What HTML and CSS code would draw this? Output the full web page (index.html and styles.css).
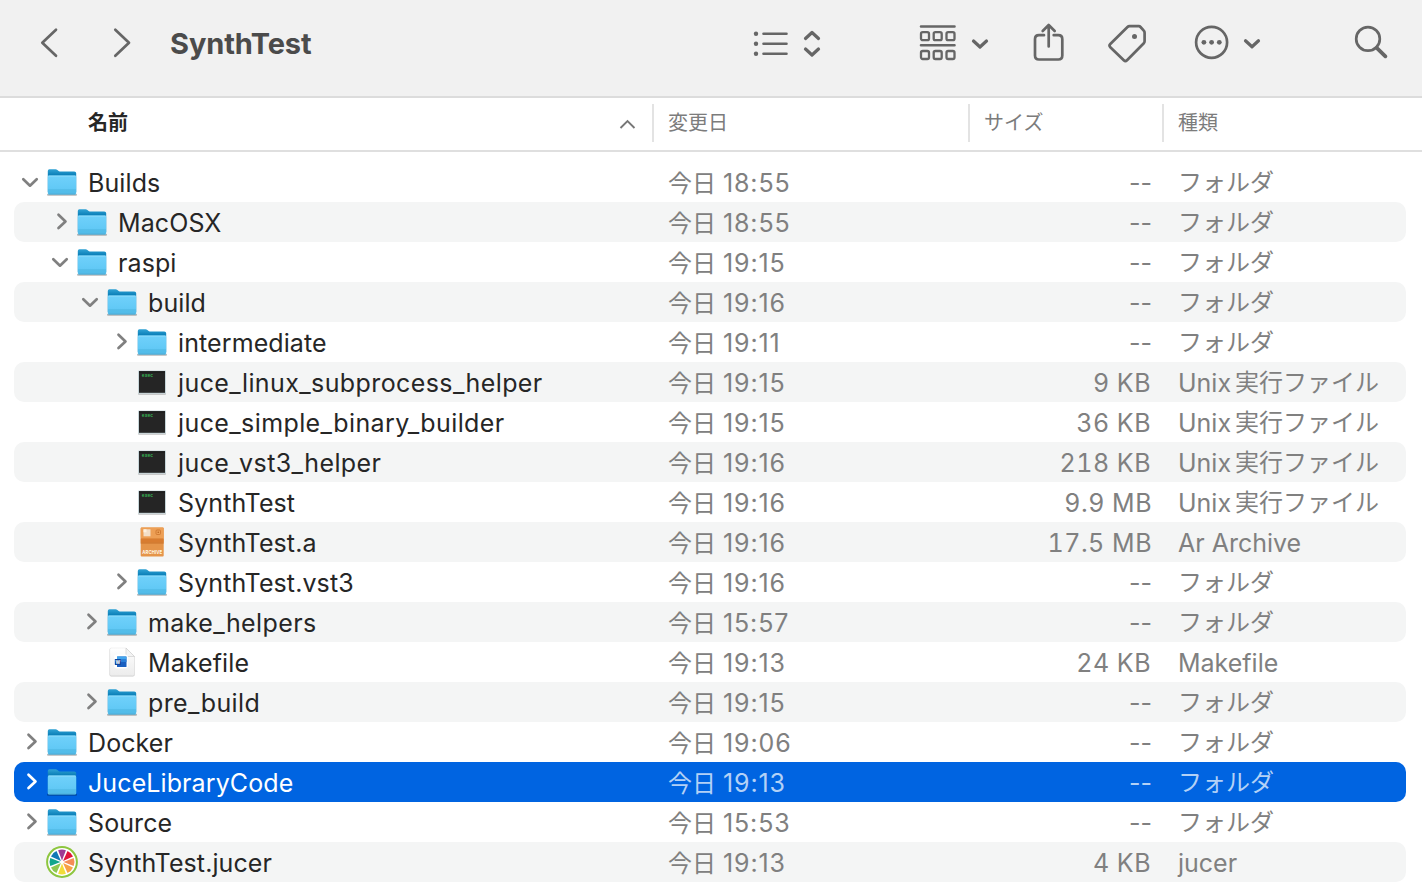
FILE: index.html
```html
<!DOCTYPE html>
<html lang="ja">
<head>
  <meta charset="UTF-8" />
  <meta name="viewport" content="width=device-width, initial-scale=1.0" />
  <title>SynthTest</title>
  <link rel="stylesheet" href="styles.css">
</head>
<body>

  <!-- Shared icons -->
  <svg class="defs" width="0" height="0">
    <defs>
      <linearGradient id="folderBack" x1="0" y1="0" x2="0" y2="1">
        <stop offset="0" stop-color="#31a3d5"/>
        <stop offset="0.25" stop-color="#0c80b9"/>
        <stop offset="1" stop-color="#0c80b9"/>
      </linearGradient>
      <linearGradient id="folderFront" x1="0" y1="0" x2="0" y2="1">
        <stop offset="0" stop-color="#70d1fb"/>
        <stop offset="1" stop-color="#5bc5f3"/>
      </linearGradient>
      <linearGradient id="paper" x1="0" y1="0" x2="0" y2="1">
        <stop offset="0" stop-color="#ffffff"/>
        <stop offset="1" stop-color="#ececec"/>
      </linearGradient>
      <symbol id="folder" viewBox="0 0 32 32">
        <path d="M2 28.700h28" stroke="#000" stroke-opacity=".28" stroke-width="2" stroke-linecap="round"/>
        <path d="M1.800 5q0-1.800 1.600-1.800h6.200q1 0 1.800.8l.9.800q.6.600 1.600.600h14.300q2 0 2 1.800V26H1.800z" fill="url(#folderBack)"/>
        <path d="M1.800 11q0-1.400 1.400-1.400h25.600q1.400 0 1.400 1.400v16q0 1.500-1.400 1.500H3.200q-1.400 0-1.400-1.500z" fill="url(#folderFront)"/>
        <path d="M2.500 10h27" stroke="#a1e2fc" stroke-width=".7"/>
        <path d="M2 24h28M2 26h28" stroke="#45add9" stroke-width=".8"/>
        <path d="M2.600 28h26.800" stroke="#3f9dc4" stroke-width=".8"/>
      </symbol>
      <symbol id="exec" viewBox="0 0 32 32">
        <rect x="2" y="6" width="28" height="23" rx="1" fill="#000" opacity=".18"/>
        <rect x="2" y="4.500" width="28" height="23.300" rx=".8" fill="#c7d6da"/>
        <rect x="3" y="5.300" width="26" height="21.500" fill="#252525"/>
        <rect x="3" y="5.300" width="26" height="1" fill="#111"/>
        <text x="5.800" y="10.600" font-family="Liberation Mono, monospace" font-size="4.600" font-weight="bold" fill="#35b553">exec</text>
      </symbol>
      <symbol id="archive" viewBox="0 0 32 32">
        <rect x="4.700" y="1.500" width="23" height="29" rx="1" fill="#e5954a"/>
        <rect x="4.700" y="1.500" width="23" height="11" rx="1" fill="#ed9f55"/>
        <rect x="4.700" y="12.500" width="23" height="4" fill="#d87c30"/>
        <rect x="4.700" y="16.500" width="23" height="1" fill="#c97026"/>
        <rect x="7.500" y="3.300" width="7" height="7" fill="#f3dfc8"/>
        <rect x="7.500" y="3.300" width="3" height="3" fill="#fff2df"/>
        <rect x="20" y="4" width="4.500" height="4.500" rx="1" fill="none" stroke="#ca742c" stroke-width=".8"/>
        <circle cx="22.250" cy="6.250" r=".8" fill="#b86520"/>
        <text x="16.200" y="28.200" text-anchor="middle" textLength="20" lengthAdjust="spacingAndGlyphs" font-family="Inter, sans-serif" font-size="5.400" font-weight="bold" fill="#fff4e4">ARCHIVE</text>
      </symbol>
      <symbol id="doc" viewBox="0 0 32 32">
        <path d="M3.500 4q0-1.700 1.700-1.700h15L28.700 10.500v18.300q0 1.700-1.700 1.700H5.200q-1.700 0-1.700-1.700z" fill="#000" opacity=".2"/>
        <path d="M3.700 3.700q0-1.700 1.700-1.700h14.600l8.500 8.500v17.600q0 1.700-1.700 1.700H5.400q-1.700 0-1.700-1.700z" fill="url(#paper)" stroke="#dedede" stroke-width=".4"/>
        <path d="M20 2l8.500 8.500h-6.600q-1.900 0-1.900-1.900z" fill="#f4f4f4" stroke="#c9c9c9" stroke-width=".6"/>
        <rect x="8" y="8.500" width="14" height="14" rx="3" fill="#fff"/>
        <rect x="11" y="10.500" width="9.500" height="10.500" rx=".5" fill="#1a5fc0"/>
        <rect x="11" y="10.500" width="9.500" height="3" fill="#42a5ee"/>
        <rect x="11" y="13.500" width="9.500" height="2.500" fill="#2b7fd8"/>
        <rect x="8.800" y="13" width="6" height="6" rx=".6" fill="#12469c"/>
        <text x="11.800" y="17.600" text-anchor="middle" font-family="Inter, sans-serif" font-size="4.500" font-weight="bold" fill="#fff">W</text>
      </symbol>
      <symbol id="jucer" viewBox="0 0 32 32">
        <circle cx="16" cy="16" r="14.900" fill="#fff" stroke="#8dc63f" stroke-width="2"/>
        <path d="M16 14.500l-3.900-10.200q3.900-1.600 7.800 0z" fill="#9e3b94"/>
        <path d="M16 14.500l-3.900-10.200q3.900-1.600 7.800 0z" fill="#e1153c" transform="rotate(45 16 16)"/>
        <path d="M16 14.500l-3.900-10.200q3.900-1.600 7.800 0z" fill="#f58d56" transform="rotate(90 16 16)"/>
        <path d="M16 14.500l-3.900-10.200q3.900-1.600 7.800 0z" fill="#f7a146" transform="rotate(135 16 16)"/>
        <path d="M16 14.500l-3.900-10.200q3.900-1.600 7.800 0z" fill="#f2dc39" transform="rotate(180 16 16)"/>
        <path d="M16 14.500l-3.900-10.200q3.900-1.600 7.800 0z" fill="#8fc850" transform="rotate(225 16 16)"/>
        <path d="M16 14.500l-3.900-10.200q3.900-1.600 7.800 0z" fill="#12a58d" transform="rotate(270 16 16)"/>
        <path d="M16 14.500l-3.900-10.200q3.900-1.600 7.800 0z" fill="#1179b5" transform="rotate(315 16 16)"/>
      </symbol>
      <symbol id="open" viewBox="0 0 20 20">
        <path d="M3.300 7.300l6.700 6.400 6.700-6.400" fill="none" stroke="currentColor" stroke-width="2.700" stroke-linecap="round" stroke-linejoin="round"/>
      </symbol>
      <symbol id="closed" viewBox="0 0 20 20">
        <path d="M8.500 2.800l7 6.600-7 6.600" fill="none" stroke="currentColor" stroke-width="2.700" stroke-linecap="round" stroke-linejoin="round"/>
      </symbol>
    </defs>
  </svg>

  <header class="toolbar">
    <svg class="tool back" width="20" height="32" viewBox="0 0 20 32"><path d="M17 2.800L3.300 15.800l13.700 13"/></svg>
    <svg class="tool forward" width="20" height="32" viewBox="0 0 20 32"><path d="M3.300 2.800l13.700 13-13.700 13"/></svg>
    <h1>SynthTest</h1>

    <svg class="tool view" width="70" height="32" viewBox="0 0 70 32">
      <g fill="currentColor" stroke="none"><circle cx="4" cy="6.800" r="2.200"/><circle cx="4" cy="16.800" r="2.200"/><circle cx="4" cy="26.800" r="2.200"/></g>
      <path d="M11.500 6.800h23M11.500 16.800h23M11.500 26.800h23" stroke-width="2.600"/>
      <path d="M53.500 11.500l6.500-6 6.500 6M53.500 22l6.500 6 6.500-6" stroke-width="3.200"/>
    </svg>
    <svg class="tool group" width="72" height="38" viewBox="0 0 72 38">
      <path d="M3 2.500h33.500M3 21.300h33.500" stroke-width="2.600"/>
      <g stroke-width="2.300">
        <rect x="3" y="8.200" width="8" height="8" rx="1.700"/><rect x="15.700" y="8.200" width="8" height="8" rx="1.700"/><rect x="28.500" y="8.200" width="8" height="8" rx="1.700"/>
        <rect x="3" y="27" width="8" height="8" rx="1.700"/><rect x="15.700" y="27" width="8" height="8" rx="1.700"/><rect x="28.500" y="27" width="8" height="8" rx="1.700"/>
      </g>
      <path d="M55.500 17l6.500 6 6.500-6" stroke-width="3.200"/>
    </svg>
    <svg class="tool share" width="32" height="40" viewBox="0 0 32 40">
      <path d="M11 12.200H6q-4 0-4 4v16.300q0 4 4 4h19.300q4 0 4-4V16.200q0-4-4-4H20.700"/>
      <path d="M15.700 23.500V2.500M9.700 8l6-6 6 6"/>
    </svg>
    <svg class="tool tag" width="40" height="40" viewBox="0 0 40 40">
      <path d="M22.500 3.200h9.300q1 0 1.700.8l3.300 3.700q.8.800.8 2v8.500q0 1.200-.8 2L20 37.200q-1.600 1.600-3.200 0L3.300 24.200q-1.600-1.600 0-3.200L20.500 4q.8-.8 2-.8z"/>
      <circle cx="27.500" cy="13.500" r="2.500" fill="currentColor" stroke="none"/>
    </svg>
    <svg class="tool more" width="68" height="36" viewBox="0 0 68 36">
      <circle cx="18.600" cy="17.300" r="15.500"/>
      <g fill="currentColor" stroke="none"><circle cx="10.900" cy="17.300" r="2.400"/><circle cx="18.600" cy="17.300" r="2.400"/><circle cx="26.300" cy="17.300" r="2.400"/></g>
      <path d="M52.500 15.800l6.500 6 6.500-6" stroke-width="3.200"/>
    </svg>
    <svg class="tool search" width="36" height="36" viewBox="0 0 36 36">
      <circle cx="14" cy="13.900" r="11.800"/>
      <path d="M22.700 22.800l8.700 8.500" stroke-width="3.800"/>
    </svg>
  </header>

  <div class="columns">
    <div class="sorted"><span>名前</span>
      <svg width="18" height="12" viewBox="0 0 18 12"><path d="M2.500 10l7-7 7 7" fill="none" stroke="#777" stroke-width="1.900"/></svg>
    </div>
    <div>変更日</div>
    <div>サイズ</div>
    <div>種類</div>
  </div>

  <main class="list">
    <div class="row">
      <div class="name l0"><svg class="arrow"><use href="#open"/></svg><svg class="icon"><use href="#folder"/></svg><span>Builds</span></div>
      <div class="date"><span class="jp">今日</span> 18:55</div><div class="size none">--</div><div class="kind"><span class="jp">フォルダ</span></div>
    </div>
    <div class="row">
      <div class="name l1"><svg class="arrow"><use href="#closed"/></svg><svg class="icon"><use href="#folder"/></svg><span>MacOSX</span></div>
      <div class="date"><span class="jp">今日</span> 18:55</div><div class="size none">--</div><div class="kind"><span class="jp">フォルダ</span></div>
    </div>
    <div class="row">
      <div class="name l1"><svg class="arrow"><use href="#open"/></svg><svg class="icon"><use href="#folder"/></svg><span>raspi</span></div>
      <div class="date"><span class="jp">今日</span> 19:15</div><div class="size none">--</div><div class="kind"><span class="jp">フォルダ</span></div>
    </div>
    <div class="row">
      <div class="name l2"><svg class="arrow"><use href="#open"/></svg><svg class="icon"><use href="#folder"/></svg><span>build</span></div>
      <div class="date"><span class="jp">今日</span> 19:16</div><div class="size none">--</div><div class="kind"><span class="jp">フォルダ</span></div>
    </div>
    <div class="row">
      <div class="name l3"><svg class="arrow"><use href="#closed"/></svg><svg class="icon"><use href="#folder"/></svg><span>intermediate</span></div>
      <div class="date"><span class="jp">今日</span> 19:11</div><div class="size none">--</div><div class="kind"><span class="jp">フォルダ</span></div>
    </div>
    <div class="row">
      <div class="name l3"><svg class="arrow"></svg><svg class="icon"><use href="#exec"/></svg><span class="snake">juce_linux_subprocess_helper</span></div>
      <div class="date"><span class="jp">今日</span> 19:15</div><div class="size">9 KB</div><div class="kind">Unix<span class="jp after">実行ファイル</span></div>
    </div>
    <div class="row">
      <div class="name l3"><svg class="arrow"></svg><svg class="icon"><use href="#exec"/></svg><span class="snake">juce_simple_binary_builder</span></div>
      <div class="date"><span class="jp">今日</span> 19:15</div><div class="size">36 KB</div><div class="kind">Unix<span class="jp after">実行ファイル</span></div>
    </div>
    <div class="row">
      <div class="name l3"><svg class="arrow"></svg><svg class="icon"><use href="#exec"/></svg><span class="snake">juce_vst3_helper</span></div>
      <div class="date"><span class="jp">今日</span> 19:16</div><div class="size">218 KB</div><div class="kind">Unix<span class="jp after">実行ファイル</span></div>
    </div>
    <div class="row">
      <div class="name l3"><svg class="arrow"></svg><svg class="icon"><use href="#exec"/></svg><span>SynthTest</span></div>
      <div class="date"><span class="jp">今日</span> 19:16</div><div class="size mb">9.9 MB</div><div class="kind">Unix<span class="jp after">実行ファイル</span></div>
    </div>
    <div class="row">
      <div class="name l3"><svg class="arrow"></svg><svg class="icon"><use href="#archive"/></svg><span>SynthTest.a</span></div>
      <div class="date"><span class="jp">今日</span> 19:16</div><div class="size mb">17.5 MB</div><div class="kind">Ar Archive</div>
    </div>
    <div class="row">
      <div class="name l3"><svg class="arrow"><use href="#closed"/></svg><svg class="icon"><use href="#folder"/></svg><span>SynthTest.vst3</span></div>
      <div class="date"><span class="jp">今日</span> 19:16</div><div class="size none">--</div><div class="kind"><span class="jp">フォルダ</span></div>
    </div>
    <div class="row">
      <div class="name l2"><svg class="arrow"><use href="#closed"/></svg><svg class="icon"><use href="#folder"/></svg><span class="snake">make_helpers</span></div>
      <div class="date"><span class="jp">今日</span> 15:57</div><div class="size none">--</div><div class="kind"><span class="jp">フォルダ</span></div>
    </div>
    <div class="row">
      <div class="name l2"><svg class="arrow"></svg><svg class="icon"><use href="#doc"/></svg><span>Makefile</span></div>
      <div class="date"><span class="jp">今日</span> 19:13</div><div class="size">24 KB</div><div class="kind">Makefile</div>
    </div>
    <div class="row">
      <div class="name l2"><svg class="arrow"><use href="#closed"/></svg><svg class="icon"><use href="#folder"/></svg><span class="snake">pre_build</span></div>
      <div class="date"><span class="jp">今日</span> 19:15</div><div class="size none">--</div><div class="kind"><span class="jp">フォルダ</span></div>
    </div>
    <div class="row">
      <div class="name l0"><svg class="arrow"><use href="#closed"/></svg><svg class="icon"><use href="#folder"/></svg><span>Docker</span></div>
      <div class="date"><span class="jp">今日</span> 19:06</div><div class="size none">--</div><div class="kind"><span class="jp">フォルダ</span></div>
    </div>
    <div class="row selected">
      <div class="name l0"><svg class="arrow"><use href="#closed"/></svg><svg class="icon"><use href="#folder"/></svg><span>JuceLibraryCode</span></div>
      <div class="date"><span class="jp">今日</span> 19:13</div><div class="size none">--</div><div class="kind"><span class="jp">フォルダ</span></div>
    </div>
    <div class="row">
      <div class="name l0"><svg class="arrow"><use href="#closed"/></svg><svg class="icon"><use href="#folder"/></svg><span>Source</span></div>
      <div class="date"><span class="jp">今日</span> 15:53</div><div class="size none">--</div><div class="kind"><span class="jp">フォルダ</span></div>
    </div>
    <div class="row">
      <div class="name l0"><svg class="arrow"></svg><svg class="icon"><use href="#jucer"/></svg><span>SynthTest.jucer</span></div>
      <div class="date"><span class="jp">今日</span> 19:13</div><div class="size">4 KB</div><div class="kind">jucer</div>
    </div>
  </main>

</body>
</html>
```
FILE: styles.css
```css
* {
  box-sizing: border-box;
}
body {
  margin: 0;
  height: 892px;
  overflow: hidden;
  background: #fff;
  font-family: Inter, "Noto Sans CJK JP", sans-serif;
  font-size: 25px;
  font-weight: 430;
  color: #262626;
}
.defs {
  display: block;
}

/* Toolbar */
.toolbar {
  display: flex;
  align-items: center;
  height: 98px;
  padding: 0 32px 10px 39px;
  background: #f1f1f1;
  border-bottom: 2px solid #dcdcdc;
}
.toolbar h1 {
  width: 582px;
  margin: 0 0 0 38px;
  padding-top: 2px;
  font-size: 29px;
  line-height: 40px;
  font-weight: 700;
  letter-spacing: -0.1px;
  color: #4b4b4b;
}
.tool {
  flex: none;
  color: #666;
  fill: none;
  stroke: currentColor;
  stroke-width: 2.7;
  stroke-linecap: round;
  stroke-linejoin: round;
}
.forward {
  margin-left: 53px;
}
.group {
  margin-left: 96px;
}
.share {
  margin-left: 43px;
}
.tag {
  margin-left: 42px;
}
.more {
  margin-left: 46px;
}
.search {
  margin-left: auto;
}

/* Column titles */
.columns {
  display: grid;
  grid-template-columns: 652px 316px 194px 1fr;
  align-items: center;
  height: 54px;
  padding-bottom: 2px;
  border-bottom: 2px solid #dfdfdf;
  font-size: 20px;
  color: #7c7c7c;
}
.columns div {
  height: 38px;
  line-height: 38px;
  padding-left: 14px;
  border-left: 2px solid #e3e3e3;
}
.columns .sorted {
  display: flex;
  align-items: center;
  justify-content: space-between;
  padding: 0 16px 0 88px;
  border-left: none;
  font-weight: 700;
  color: #262626;
}
.sorted svg {
  margin-top: 2px;
}

/* File rows */
.list {
  padding: 10px 16px 0 14px;
}
.row {
  display: grid;
  grid-template-columns: 640px 316px 182px 1fr;
  height: 40px;
  line-height: 42px;
  border-radius: 10px;
  color: #808080;
  white-space: nowrap;
}
.row:nth-child(even) {
  background: #f4f5f5;
}
.name {
  display: flex;
  align-items: center;
  height: 40px;
  padding-left: 6px;
  line-height: 38px;
  letter-spacing: 0.1px;
  color: #262626;
}
.name span {
  padding-top: 2px;
}
.name .snake {
  letter-spacing: 0.4px;
}
.l1 {
  padding-left: 36px;
}
.l2 {
  padding-left: 66px;
}
.l3 {
  padding-left: 96px;
}
.arrow {
  width: 20px;
  height: 20px;
  margin-right: 6px;
  color: #808080;
}
.icon {
  width: 32px;
  height: 32px;
  margin-right: 10px;
}
.date {
  padding-left: 14px;
  letter-spacing: 0.9px;
}
.date .jp {
  margin-right: -1px;
}
.size {
  padding-right: 1px;
  text-align: right;
  letter-spacing: 0.5px;
  font-variant-numeric: tabular-nums;
}
.mb {
  padding-right: 0;
}
.size.none {
  padding-right: 0;
  letter-spacing: 0;
  font-variant-numeric: normal;
}
.kind {
  padding-left: 26px;
}
.jp {
  font-family: "Noto Sans CJK JP", sans-serif;
  font-size: 24px;
  line-height: 1;
  letter-spacing: 0;
}
.kind .jp {
  vertical-align: 1px;
}
.after {
  margin-left: 4px;
}
.row.selected {
  background: #0064e1;
  color: #b3d1f6;
}
.selected .name,
.selected .arrow {
  color: #fff;
}
```
